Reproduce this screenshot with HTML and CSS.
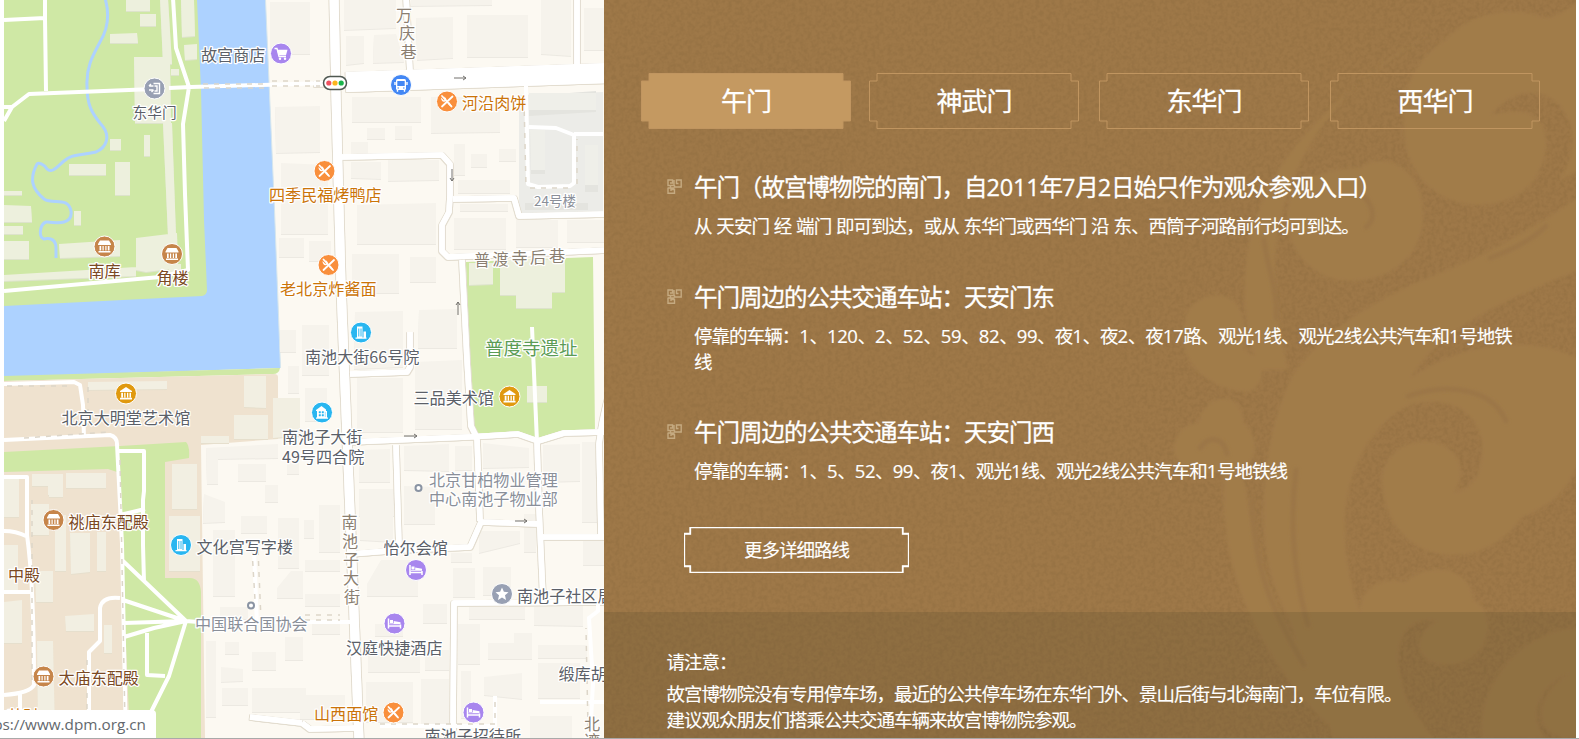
FILE: index.html
```
<!DOCTYPE html>
<html lang="zh-CN">
<head>
<meta charset="utf-8">
<title>路线指引</title>
<link rel="stylesheet" href="styles.css">
</head>
<body>
<main class="page">
<section class="map">
<svg class="map-canvas" viewBox="4 0 600 738" width="600" height="738">
<defs>
<g id="food"><circle class="pin" r="10.5" fill="#f98f3c"/><path d="M-5-5.500l9.500 10.500M5.500-5L-5 5" stroke="#fff" stroke-width="1.800" stroke-linecap="round" fill="none"/><path d="M2 .5L5 4.500 3.500 5 .5 2ZM-6-4c0 3 2 5 4 4s2-3-1-5l1 3-1 1Z" fill="#fff"/></g>
<g id="palace"><circle class="pin" r="10.500" fill="#c6854a"/><path d="M-4.500-6h9l2 3.500v1h-13v-1ZM-5-.5h1.700V4H-5ZM-2-.5h1.200V4H-2ZM.8-.5H2V4H.8ZM3.300-.5H5V4H3.300ZM-6 4.500H6V6H-6Z" fill="#fff"/></g>
<g id="museum"><circle class="pin" r="10.500" fill="#e0990f"/><path d="M0-6.500L6-2.500v1H-6v-1ZM-4.800-.8h1.800V4h-1.800ZM-1.800-.8h1.300V4h-1.300ZM1-.8h1.300V4H1ZM3.500-.8H5V4H3.500ZM-6 4.300H6V6H-6Z" fill="#fff"/></g>
<g id="tower"><circle class="pin" r="10.500" fill="#29b6f0"/><path d="M-4-6h5.500V5H-4ZM2.500-1H5v6H2.500ZM-5.500 5h11v1.300h-11Z" fill="#fff"/><path d="M-2.200-4v8M0-4v8" stroke="#29b6f0" stroke-width="1"/></g>
<g id="house"><circle class="pin" r="10.500" fill="#29b6f0"/><path d="M-.5-6.500L4-3v1.500H5V5h1v1.200H-6V5h1v-6.500h-1V-2.500Z" fill="#fff"/><path d="M-3-1h1.600v1.600H-3ZM0-1h1.600v1.600H0ZM-3 2h1.600v1.600H-3ZM0 2h1.600v1.600H0ZM3.300-.5v5" fill="#29b6f0" stroke="#29b6f0" stroke-width=".4"/></g>
<g id="hotel"><circle class="pin" r="10.500" fill="#a886ee"/><path d="M-6-5v10M-6 2.600H6M6 5V1" stroke="#fff" stroke-width="1.500" fill="none"/><path d="M-4.500-3.500h3v3h-3ZM-.8-2.500L6-1.300V.8H-5V0h4.200Z" fill="#fff"/></g>
</defs>
<rect x="4" width="600" height="738" fill="#fcf9f2"/>

<path d="M196 0h69.500l6 140 3 70 6 158L4 377V300l200-10Z" fill="#add2ff"/>
<path d="M265.500 0l6 140 3 70 6 158" fill="none" stroke="#d5e6ee"/>
<path d="M4 0h193l4 90 3 130 3 70q0 5-5 6L4 306ZM4 376l276-8q-1 6-7 6L4 381Z" fill="#cfe8a5"/>
<path d="M4 381l270-7q4 0 4 3v62l-77 6 4 293H4Z" fill="#efe2cf"/>
<path d="M4 452l116-6 66-4q4 4 3 16l-24 4v116h25q10 0 11 14v146h-71l-6-138-4-127-12-4-104 3Z" fill="#cfe8a5"/>
<path d="M466 262l127-5 2 176-27 1-27 9-23-11-43 3-7-20Z" fill="#cfe8a5"/>
<path d="M519 95l84-3v121l-84 1Z" fill="#ecece8"/>

<g class="blocks-shadow"><use href="#blocks" y="1"/></g>
<path id="blocks" fill="#f6f3ec" d="M270 2h40v52h-40ZM275 107l45-1v46l-44 1ZM281 163l47 2v69h-47ZM344-2h52v30l-52 2ZM346 36h18v27l-18 2ZM374 35l22-1 8 28-31 1ZM416 18l37-1v41l-36 2ZM411-2h81v7l-81 1ZM467 15h61v42h-61ZM541-2h30v58l-30-2ZM584 8h20v42h-20ZM352 97h69v25h-69ZM431 97h69v35l-69 1ZM367 128h18v11h-18ZM395 126h17v13h-17ZM351 142h17v13h-17ZM351 162h30v17l-30-1ZM388 160h51v20l-51 1ZM454 144h11v31h-11ZM471 154h16v13h-16ZM499 149h17v12h-17ZM458 180h52v13h-52ZM460 204h48v7h-48ZM357 205l79-2v41h-79ZM454 218h52v31h-52ZM516 220h42v27h-42ZM567 220h37v22h-37ZM279 238h25v19h-25ZM309 241h22v20h-22ZM352 254h47v39h-47ZM410 257h26v25h-26ZM280 330h16v22h-16ZM302 325h27v50h-27ZM288 366h11v27h-11ZM355 312l48-1v56l-49 2ZM419 310l38-1v39h-39ZM357 378h46v54h-46ZM415 362l47-2v69h-47ZM305 388h22v33h-22ZM359 450l31-1v33h-31ZM404 446l45-2v27l-45-1ZM455 446h17v24h-17ZM483 443l46 5v19l-46 1ZM543 445l37-1v37l-37 1ZM582 442h20v80h-20ZM206 448l72-4v14l-60 1v25h-11ZM238 464h28v17h-28ZM265 485h13v17h-13ZM287 454h12v20h-12ZM204 494l21 8v20l-22 1ZM213 530h22v66h-22ZM241 516h26v17h-26ZM278 518h21v50h-21ZM277 588l14-17h12v27h-26ZM220 607h28v12h-28ZM206 641h10v76h-10ZM225 642h14v12h-14ZM221 667l22 2v12l-22 1ZM252 652h24v18h-24ZM222 688h26v17h-26ZM252 688h54v24h-54ZM285 637h18v23h-18ZM304 520h10v18h-10ZM319 505h21v47h-21ZM305 560h35v11h-35ZM305 594h35v12h-35ZM312 622h28v12h-28ZM300 695h45v24h-45ZM359 489h35v27h-35ZM404 486l31 1v37h-31ZM360 516h33v26l-33-2ZM367 584l14-24h37v36h-51ZM451 553h21v9h-21ZM453 568h22v29h-22ZM483 567h28v28h-28ZM524 514h12v38h-12ZM479 531h41v12l-41 10ZM423 604h24v19h-24ZM375 624h28v12h-28ZM368 644l52 6v22h-52ZM425 650h24v20h-24ZM366 682h47v40h-47ZM421 679h28v47h-28ZM458 624h22v40h-22ZM469 607h56v12h-56ZM534 607l49-1v20l-49-1ZM488 643h26v-10h18v26h-44ZM538 645h49v13h-49ZM538 663h42v35h-42ZM484 677l38-4v26l-38-4ZM461 671h10v47h-10ZM530 716h42v22h-42ZM583 534h21v31h-21Z"/>
<path class="palace-block" d="M126-2h24v13h-24ZM140 14h16v12h-16ZM110 34l27-1 1 10h-28ZM160-2h8l4 66h-9ZM181 0h13l1 36-13 1ZM184 45l13-1v15l-12 1ZM134 57h36l1 66h-36ZM171 69h8v6h-8ZM163 123h9l4 112-8 1ZM110 139h11v11h-11ZM144 135h6v21h-6ZM69 164h37v11H69ZM115 162h15v33h-15ZM74 211h7v14h-7ZM4 191h18v4H4ZM4 205l27 1 1 16H4ZM4 226h19v8H4ZM4 241h25v18H4ZM59 244l61-4v16l-60 2ZM136 238l41-5 1 35-32 4-10-2ZM4 275l132-8v9L4 281ZM169 264h12v9h-12ZM469 263h24v21l-24 1ZM500 260l65-1v33h-13v16h-36v-13h-16ZM527 386h20v16h-20Z"/>
<path class="south-block" d="M88 382l79-1v8l-79 1ZM244 376h22v32l-22-1ZM234 415h34v24h-34ZM201 436h28v7h-28ZM273 398h27v38l-27 2ZM66 473h40v15H66ZM32 474h31v21H48v-9H32ZM172 464h25v45h-25ZM169 516h31v55h-31ZM4 479h15v38H4ZM49 490h14v7H49ZM31 504h18v31H31ZM55 515h11v56H55ZM70 533h20v39l-19 2ZM97 532h9v39h-9ZM4 545h14v47H4ZM35 571h18v31H36ZM65 616l29-2v17H66ZM104 625h8v28h-8ZM4 602l18-2v43H4ZM37 641h16l2 90H38Z"/>
<path d="M529 96l67-5v21l-67 4ZM530 132h15v42h-14ZM585 147h13v45h-13ZM525 203h63v7h-63Z" fill="#e4e4df"/><path d="M529 93h67v17h-67ZM530 130h15v40h-14ZM585 145h13v40h-13Z" fill="#efefe9"/>

<g class="streams"><path d="M105-2c5 17 3 31-5 44-7 13-14 25-13 44 0 19 5 27 13 37 13 14 5 25-4 29-19 4-24 2-32 9-6 5-12 13-17 8-3-5-9-7-10-5-8 15-5 25 7 35 9 6 24-3 27 12 2 14-14 12-25 11-6 2-8 15-2 17 10-2 12 4 12 9v10"/></g>
<g class="street-edge"><use href="#streets"/></g>
<g id="streets" class="streets">
<path class="w9" d="M334-5l2 100 5 190 8 202 10 253"/>
<path class="w18" d="M346 82l264-9"/>
<path d="M406-5l4 78M577-5v70M340 157l102-2 8 9v31l-1 17-7 13v26l6 6 160-7M453 199l61-1 5 18 90-2M462 260l5 100 4 66 6 12 3 83M350 374l57-2 3-5v-35M349 442l119-5 50-3 20 7 26-8 40-1M396 445l3 103M537 440l2 68 4 90M610 390q-8 28-11 54l2 92M350 554l50-4 70-3 11-25 58 2M541 537h63M453 730l1-127 150-1M340 83l-26 1M355 728l-45 1-8-6M250 717l52 6"/>
</g>
<path class="mid-street" d="M532 327l5 115M540 702h64M590 738l3-55-4-65 9-7V600"/>
<g class="paths">
<path d="M4 20l41-2V-2M45 18l1 73M4 107h8l17-13 125-5M169 88l22-1 135-4M4 121l8-14M173-2l3 50 13 39-6 37 2 70 3 76-28 7L4 291M4 384l70-2 6 3 3 20 1 33M4 440l106-5q7 2 7 9l5 100 4 199M119 451h25v40l-1 9v45l1 37M120 515l25-6M122 560l64 61-63-21M124 623l62-2-17 55-25 50M124 637l30-9 32-7 12 1M147 633v42l18 1M4 477h23v58q7 50 7 150-4 8-30 10M4 531q12 0 22 5M4 592h29M120 598q-18-2-20 10v33l-11 11v80M20 694v30"/>
<path d="M526 86l2 98 10 3 32-1 4-3v-48l-18-7-27-1M574 134h29M254 550l3 75M198 622h152M380 726h115v-30"/>
</g>
<g class="dashes"><path d="M203 84h66M204 88h65M272 81h48M272 86h48M524 100l2 87M530 188h40M577 184v-45M252 550l3 50M258 550l3 70M305 615h35M305 620h35M380 724h115v-28M588 728l-2-100M7 386h66M88 387v43M24 438l84-6M120 460l1 50 4 215M87 660v70M32 680V500"/></g>
<g class="arrows"><path d="M454 78h12m-3-2 3 2-3 2M452 169v12m-2-3 2 3 2-3M458 315v-13m-2 3 2-3 2 3M404 436h13m-3-2 3 2-3 2M515 521h12m-3-2 3 2-3 2"/></g>

<g class="labels">
<text x="201" y="61">故宫商店</text><text x="132.500" y="118" font-size="14.700">东华门</text>
<text x="429" y="485.500" class="muted">北京甘柏物业管理</text><text x="429" y="505" class="muted">中心南池子物业部</text>
<text x="195" y="630" class="muted">中国联合国协会</text><text x="534" y="206" class="muted" font-size="13.500">24号楼</text>
<text x="305" y="362.500">南池大街66号院</text><text x="413.500" y="404">三品美术馆</text><text x="61.500" y="424">北京大明堂艺术馆</text>
<text x="282" y="443">南池子大街</text><text x="282" y="463">49号四合院</text><text x="196.500" y="552.500">文化宫写字楼</text>
<text x="383.500" y="554">怡尔会馆</text><text x="346" y="654">汉庭快捷酒店</text><text x="517" y="601.500">南池子社区居</text>
<text x="558.500" y="680">缎库胡同</text><text x="424.500" y="741.500">南池子招待所</text>
<g class="orange"><text x="269" y="201">四季民福烤鸭店</text><text x="462" y="109">河沿肉饼</text><text x="280" y="295">老北京炸酱面</text><text x="314" y="720">山西面馆</text></g>
<g class="brown"><text x="88.500" y="276.500">南库</text><text x="156.500" y="284">角楼</text><text x="68.500" y="527.500">祧庙东配殿</text><text x="8" y="581">中殿</text><text x="58.500" y="683.500">太庙东配殿</text></g>
<g class="road-name"><text x="396 399 400.500" y="21 39 58">万庆巷</text><text x="341.500 342 343 343 344" y="528 547 566 584 603">南池子大街</text><text x="474 492.500 511.500 530 549" y="265.500 265 264 262.500 262">普渡寺后巷</text><text x="584 584" y="730 747">北湾</text></g>
<text x="485" y="355" font-size="18.500" class="park">普度寺遗址</text>
<text x="7" y="722" class="orange">英财</text>
</g>

<g transform="translate(281 53.500)"><circle class="pin" r="10.500" fill="#a886ee"/><path d="M-6.500-5h2.500l2 8h7" fill="none" stroke="#fff" stroke-width="1.300"/><path d="M-4-3.800H6.500L5 1.700h-7.500Z" fill="#fff"/><circle cx="-1" cy="5.300" r="1.200" fill="#fff"/><circle cx="4" cy="5.300" r="1.200" fill="#fff"/></g>
<g transform="translate(154.500 88.500)"><circle class="pin" r="10.500" fill="#98a0b3"/><path d="M-1-5h6V5h-6M0-2.500h2.500v5H0M-5.500-2.500H-1M-3.500-4.500l-2 2M-5.500 1.500H-1M-3 3.500l2-2" fill="none" stroke="#fff" stroke-width="1.400"/></g>
<g transform="translate(401 85)"><circle class="pin" r="10.500" fill="#4387f4"/><rect x="-5" y="-6" width="10" height="11" rx="1.500" fill="#fff"/><path d="M-3.700-4h7.400v5h-7.400ZM-3.500 2.500h1.500v1h-1.500ZM2 2.500h1.500v1H2Z" fill="#4387f4"/><path d="M-3.500 5v1.800M3.500 5v1.800M-6-3v3M6-3v3" stroke="#fff" stroke-width="1.400"/></g>
<g transform="translate(335 83)"><rect x="-11.500" y="-6.500" width="23" height="13" rx="6.500" fill="#fff" stroke="#4f5852" stroke-width="1.500"/><circle cx="-6.200" r="2.600" fill="#f05261"/><circle r="2.600" fill="#fbb51e"/><circle cx="6.200" r="2.600" fill="#19b34b"/></g>
<g transform="translate(502 594)"><circle class="pin" r="10.500" fill="#98a0b3"/><path d="M0-6.500l1.900 4.300 4.600.5-3.500 3 1 4.600L0 3.600-4 5.900l1-4.600-3.500-3 4.600-.5Z" fill="#fff"/></g>
<use href="#food" x="324.500" y="171"/><use href="#food" x="447" y="101.500"/><use href="#food" x="328.500" y="265"/><use href="#food" x="393.500" y="712.500"/>
<use href="#palace" x="104.500" y="246.500"/><use href="#palace" x="172" y="254"/><use href="#palace" x="53.500" y="520"/><use href="#palace" x="43.500" y="676.500"/>
<use href="#museum" x="126" y="393.500"/><use href="#museum" x="509.500" y="396.500"/>
<use href="#tower" x="361" y="332.500"/><use href="#tower" x="181" y="545"/><use href="#house" x="322" y="412.500"/>
<use href="#hotel" x="416" y="570"/><use href="#hotel" x="394.500" y="623.500"/><use href="#hotel" x="473.500" y="712.500"/>
<circle cx="418.500" cy="488" r="3" class="spot"/><circle cx="251" cy="605.500" r="3" class="spot"/>
</svg>
</section>

<section class="guide">
<svg class="pattern" viewBox="604 0 972 738" width="972" height="738">
<defs>
<filter id="grain" x="0" y="0" width="100%" height="100%" color-interpolation-filters="sRGB"><feTurbulence type="fractalNoise" baseFrequency=".25" numOctaves="3" seed="4"/><feColorMatrix values="0 0 0 0 .36  0 0 0 0 .27  0 0 0 0 .14  3 0 0 0 -1.150"/></filter>
<filter id="soft"><feGaussianBlur stdDeviation="1.500"/></filter>
</defs>
<rect x="604" width="972" height="738" fill="#9e7848"/>
<rect x="604" width="972" height="738" filter="url(#grain)" opacity=".09"/>
<g filter="url(#soft)" fill="#a17c4a">
<path d="M1580 0c-15 12-25 17-35 18-35-14-75-5-100 22-28 18-46 50-41 85-2 45 30 80 76 80 40 0 66-28 66-62 0-28-22-38-55-28 20-25 50-30 68-10 18 20 18 50 0 75l21-10Z"/>
<path d="M1430 35c-60 35-130 90-160 150-25 50-30 90-22 150l10 35h30c-15-70-18-110-5-160 20-75 70-130 120-160Z"/>
<path d="M1292 190q25-22 68-22c28-20 60 5 62 35 8 45-25 78-72 78-45 0-75-45-58-91Z"/>
<path d="M1580 196c-55 38-100 62-160 85-50 22-115 60-135 110-22 55-35 155 0 220l48 127h100c-45-65-85-120-88-205-2-60 25-100 50-120 20-60 60-95 185-143Z"/>
<path d="M1185 320q5-23 32-25c30 2 30 35 27 55 25 10 22 35 5 42-45-2-75-35-64-72ZM1174 445c3-12 12-22 24-22 10-35 45-30 46 0 15 15 15 35-2 47 10 55 20 110 50 165l90 103h-40c-75-65-125-160-118-265-30 0-55-10-50-28Z"/>
<path d="M1580 360c-40-25-115-20-165 15-60 30-95 85-95 145 25-30 45-95 90-115 38-10 72 5 72 45 0 28-15 42-28 42 12-15 10-42-20-50-28-4-52 12-52 40 5 85 100 95 140 35 30-12 45-25 58-57Z"/>
<path d="M1360 610c0-20 22-35 45-28 30-25 68-10 68 18 25 10 22 65-28 65-30 0-36-30-8-44-35-5-42 25-37 50 5 30 12 45 28 67h-60Z"/>
<path d="M1482 738c-8-55 45-112 98-110v110h-15c-35-5-30-45 5-65-35 15-40 45-25 65Z"/>
</g>
<path class="creases" filter="url(#soft)" d="M1362 195c12 10 14 25 4 32M1264 240c4 30 14 50 12 78M1408 396c45-15 85-5 98 25M1296 470c-6 50-4 100 12 155M1252 500c2 70 20 110 52 165M1200 448c10-14 24-10 27 6M1490 258c22-8 42-18 56-32"/>
</svg>
<div class="guide-body">
<nav class="tabs">
<a class="tab active"><svg viewBox="0 0 210 56"><path d="M8 .5h194v7.500h7.500v40H202v7.500H8V48H.5V8H8Z"/></svg><span>午门</span></a>
<a class="tab"><svg viewBox="0 0 210 56"><path d="M8 .5h194v7.500h7.500v40H202v7.500H8V48H.5V8H8Z"/></svg><span>神武门</span></a>
<a class="tab"><svg viewBox="0 0 210 56"><path d="M8 .5h194v7.500h7.500v40H202v7.500H8V48H.5V8H8Z"/></svg><span>东华门</span></a>
<a class="tab"><svg viewBox="0 0 210 56"><path d="M8 .5h194v7.500h7.500v40H202v7.500H8V48H.5V8H8Z"/></svg><span>西华门</span></a>
</nav>
<ul class="routes">
<li class="route"><svg class="mark" viewBox="0 0 15 15"><path id="fret" d="M3 4h2.500V1H1v5.500h6V1M11.500 4.500H9.500V1h4.700v7H7.500V6M1 9h6.500M3.500 6.500V9M1 8.500v5.700h6.500v-3.700H4v1.500"/></svg>
<h3>午门（故宫博物院的南门，自<b>2011</b>年<b>7</b>月<b>2</b>日始只作为观众参观入口）</h3><p>从 天安门 经 端门 即可到达，或从 东华门或西华门 沿 东、西筒子河路前行均可到达。</p></li>
<li class="route"><svg class="mark" viewBox="0 0 15 15"><use href="#fret"/></svg>
<h3>午门周边的公共交通车站：天安门东</h3><p>停靠的车辆：<b>1</b>、<b>120</b>、<b>2</b>、<b>52</b>、<b>59</b>、<b>82</b>、<b>99</b>、夜<b>1</b>、夜<b>2</b>、夜<b>17</b>路、观光<b>1</b>线、观光<b>2</b>线公共汽车和<b>1</b>号地铁线</p></li>
<li class="route"><svg class="mark" viewBox="0 0 15 15"><use href="#fret"/></svg>
<h3>午门周边的公共交通车站：天安门西</h3><p>停靠的车辆：<b>1</b>、<b>5</b>、<b>52</b>、<b>99</b>、夜<b>1</b>、观光<b>1</b>线、观光<b>2</b>线公共汽车和<b>1</b>号地铁线</p></li>
</ul>
<a class="more"><svg viewBox="0 0 225 46"><path d="M6 .5h213v6h5.500v33H219v6H6v-6H.5v-33H6Z"/><path d="M6.500 1v6H1M218.500 1v6h5.500M6.500 45v-6H1M218.500 45v-6h5.500"/></svg><span>更多详细路线</span></a>
</div>
<footer class="notice"><p class="notice-title">请注意：</p><p>故宫博物院没有专用停车场，最近的公共停车场在东华门外、景山后街与北海南门，车位有限。</p><p>建议观众朋友们搭乘公共交通车辆来故宫博物院参观。</p></footer>
</section>
<div class="status">ps://www.dpm.org.cn</div>
</main>
</body>
</html>
```
FILE: styles.css
```
* { box-sizing: border-box; margin: 0; padding: 0; }
body { width: 1579px; height: 739px; overflow: hidden; background: #fff; font-family: "Open Sans", "Noto Sans CJK SC", sans-serif; }
.page { position: relative; display: flex; width: 1579px; height: 739px; padding-left: 4px; border-bottom: 1px solid #a9a9a9; overflow: hidden; }
.map { width: 600px; height: 738px; overflow: hidden; }
.map-canvas { display: block; }
.blocks-shadow { opacity: .65; filter: brightness(.93); }
.palace-block { fill: #edf0dd; filter: drop-shadow(0 1px 0 #dde3cb); }
.south-block { fill: #f2efe2; filter: drop-shadow(0 1px 0 #e6dfcd); }
.streams { fill: none; stroke: #add2ff; stroke-width: 3; stroke-linejoin: round; }
.streets path { fill: none; stroke: #fff; stroke-width: 5.500; stroke-linejoin: round; }
.streets .w9 { stroke-width: 9; }
.streets .w18 { stroke-width: 20; }
.street-edge { filter: drop-shadow(1px 0 0 #e3ddd0) drop-shadow(-1px 0 0 #e3ddd0) drop-shadow(0 1px 0 #e3ddd0); }
.mid-street { fill: none; stroke: #fff; stroke-width: 4; }
.paths { fill: none; stroke: #fff; stroke-width: 4; stroke-linejoin: round; }
.dashes { fill: none; stroke: #ddd6c9; stroke-width: 1.500; stroke-dasharray: 5 6; }
.arrows { fill: none; stroke: #72706c; stroke-width: 1; }
.pin { stroke: #fff; stroke-width: 1; }
.labels { font-family: "Noto Sans CJK SC", sans-serif; font-size: 16.100px; fill: #5b5f68; paint-order: stroke; stroke: #fff; stroke-width: 2.500px; stroke-linejoin: round; }
.labels .muted { fill: #8a8f99; }
.labels .orange { fill: #cb7409; }
.labels .brown { fill: #7b4923; }
.labels .road-name { fill: #8b7f71; }
.labels .park { fill: #5b9c55; }
.spot { fill: #fff; stroke: #8a94a3; stroke-width: 2; }
.status { position: absolute; left: 0; bottom: 0; width: 156px; height: 28px; padding-right: 10px; background: #fff; border-top-right-radius: 4px; display: flex; justify-content: flex-end; align-items: center; color: #63686d; font-size: 15.300px; white-space: nowrap; }
.guide { position: relative; width: 972px; height: 738px; display: flex; flex-direction: column; color: #fff; overflow: hidden; }
.pattern { position: absolute; inset: 0; }
.creases { fill: none; stroke: #9b7647; stroke-width: 5; stroke-linecap: round; }
.guide-body { position: relative; height: 612px; padding: 73px 0 0 37px; }
.tabs { display: grid; grid-template-columns: 228px 230px 231px 210px; }
.tab { display: grid; width: 210px; height: 56px; font-size: 26px; letter-spacing: -1px; -webkit-text-stroke: .3px #fff; }
.tab svg, .tab span, .more svg, .more span { grid-area: 1 / 1; }
.tab svg { width: 210px; height: 56px; fill: none; stroke: #c09560; }
.tab.active svg { fill: #c49961; }
.tab span, .more span { place-self: center; line-height: 1; }
.routes { list-style: none; display: flex; flex-direction: column; gap: 39px; padding: 40px 50px 0 26px; }
.route { display: grid; grid-template-columns: 27px 1fr; }
.mark { width: 15px; height: 15px; margin-top: 10px; fill: none; stroke: #c5aa81; stroke-width: 1.400; }
.route h3 { font-size: 23.500px; font-weight: 400; line-height: 36px; letter-spacing: -1px; white-space: nowrap; -webkit-text-stroke: .3px #fff; }
.route p { grid-column: 2; margin-top: 8px; font-size: 18.550px; line-height: 26px; letter-spacing: -1px; word-spacing: 1px; -webkit-text-stroke: .15px #fff; }
.route:first-child p { padding-bottom: 1px; }
.route b { font-weight: 400; letter-spacing: -.4px; }
.route h3 b { letter-spacing: -.2px; }
.more { display: grid; width: 225px; height: 46px; margin: 43px 0 0 43px; font-size: 18.500px; letter-spacing: -1px; -webkit-text-stroke: .15px #fff; }
.more svg { width: 225px; height: 46px; fill: none; stroke: #fff; stroke-width: 1.300; }
.notice { position: relative; flex: 1; padding: 37px 0 0 62.500px; background: rgba(80, 68, 38, .2); font-size: 18.500px; line-height: 26px; letter-spacing: -1px; -webkit-text-stroke: .15px #fff; }
.notice-title { margin-bottom: 6px; }
```
